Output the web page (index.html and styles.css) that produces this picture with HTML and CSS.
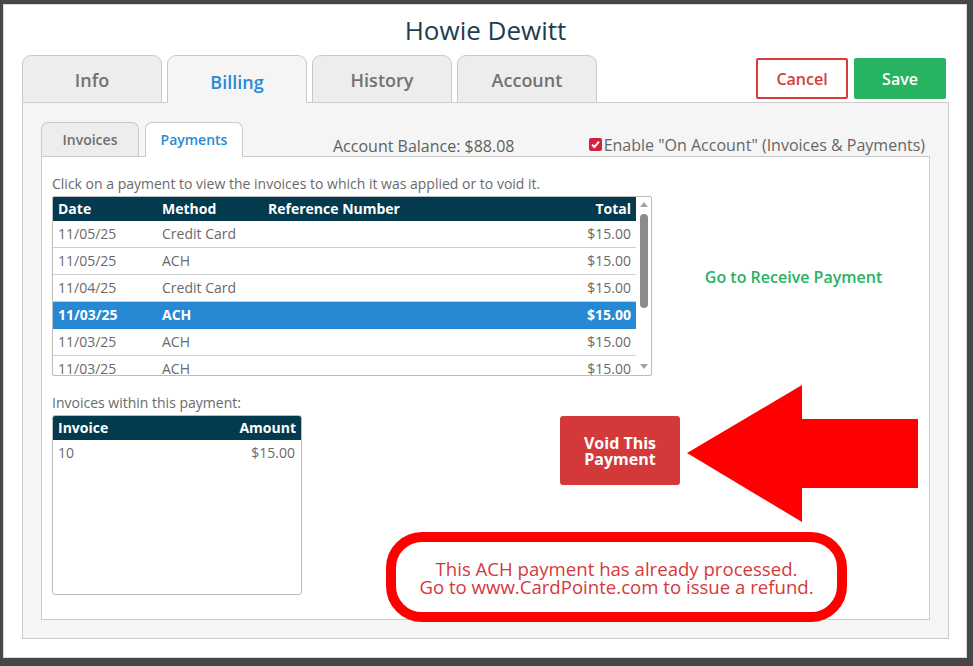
FILE: index.html
```html
<!DOCTYPE html>
<html lang="en">
<head>
    <meta charset="UTF-8" />
    <meta name="viewport" content="width=device-width, initial-scale=1" />
    <title>Howie Dewitt - Billing</title>
    <link rel="stylesheet" href="styles.css">
</head>
<body>
    <div class="modal">
        <h1 class="title">Howie Dewitt</h1>

        <div class="tabs">
            <div class="tab">Info</div>
            <div class="tab active">Billing</div>
            <div class="tab">History</div>
            <div class="tab">Account</div>
            <button class="btn btn-cancel">Cancel</button>
            <button class="btn btn-save">Save</button>
        </div>

        <div class="panel">
            <div class="subtabs">
                <div class="subtab">Invoices</div>
                <div class="subtab active">Payments</div>
                <div class="balance">Account Balance: $88.08</div>
                <label class="on-account">
                    <span class="check">
                        <svg width="9" height="9" viewBox="0 0 9 9"><path d="M1 4.6 L3.4 7 L8 1.6" fill="none" stroke="#fff" stroke-width="2"/></svg>
                    </span>
                    Enable "On Account" (Invoices &amp; Payments)
                </label>
            </div>

            <div class="inner">
                <p class="hint">Click on a payment to view the invoices to which it was applied or to void it.</p>

                <div class="row">
                    <div class="grid-box payments">
                        <div class="grid-scroll">
                            <table class="grid">
                                <thead>
                                    <tr>
                                        <th class="c-date">Date</th>
                                        <th class="c-method">Method</th>
                                        <th>Reference Number</th>
                                        <th class="num">Total</th>
                                    </tr>
                                </thead>
                                <tbody>
                                    <tr><td>11/05/25</td><td>Credit Card</td><td></td><td class="num">$15.00</td></tr>
                                    <tr><td>11/05/25</td><td>ACH</td><td></td><td class="num">$15.00</td></tr>
                                    <tr><td>11/04/25</td><td>Credit Card</td><td></td><td class="num">$15.00</td></tr>
                                    <tr class="selected"><td>11/03/25</td><td>ACH</td><td></td><td class="num">$15.00</td></tr>
                                    <tr><td>11/03/25</td><td>ACH</td><td></td><td class="num">$15.00</td></tr>
                                    <tr><td>11/03/25</td><td>ACH</td><td></td><td class="num">$15.00</td></tr>
                                </tbody>
                            </table>
                        </div>
                        <div class="scrollbar">
                            <span class="arrow-up"></span>
                            <span class="thumb"></span>
                            <span class="arrow-down"></span>
                        </div>
                    </div>
                    <div class="receive">
                        <a href="#" class="receive-link">Go to Receive Payment</a>
                    </div>
                </div>

                <p class="hint sub">Invoices within this payment:</p>

                <div class="row">
                    <div class="grid-box invoices">
                        <table class="grid small">
                            <thead>
                                <tr><th>Invoice</th><th class="num">Amount</th></tr>
                            </thead>
                            <tbody>
                                <tr><td>10</td><td class="num">$15.00</td></tr>
                            </tbody>
                        </table>
                    </div>
                    <button class="btn btn-void">Void This<br>Payment</button>
                </div>
            </div>
        </div>

        <!-- annotations -->
        <svg class="big-arrow" width="231" height="138" viewBox="0 0 231 138">
            <polygon points="0,68 115,0 115,34 231,34 231,103 115,103 115,137" fill="#ff0000"/>
        </svg>
        <div class="callout">
            This ACH payment has already processed.<br>
            Go to www.CardPointe.com to issue a refund.
        </div>
    </div>
</body>
</html>
```

FILE: styles.css
```css
body {
    margin: 0;
    padding: 4px 0 0 3px;
    background-color: #474747;
    font-family: 'Open Sans', 'Noto Sans', sans-serif;
    color: #666;
    height: 666px;
    box-sizing: border-box;
    overflow: hidden;
}

.modal {
    position: relative;
    width: 964px;
    height: 654px;
    box-sizing: border-box;
    background-color: #fff;
    border: 1px solid #d9d9d9;
    padding: 0 17px 0 18px;
}

.title {
    margin: 0;
    height: 50px;
    line-height: 50px;
    text-align: center;
    font-size: 26px;
    font-weight: 400;
    color: #1c3e4e;
}

/* main tabs */
.tabs {
    display: flex;
    align-items: flex-start;
    gap: 5px;
    height: 47px;
}

.tab {
    width: 140px;
    height: 47px;
    box-sizing: border-box;
    padding-top: 1px;
    border: 1px solid #c9c9c9;
    border-bottom: none;
    border-radius: 9px 9px 0 0;
    background-color: #ededed;
    font-size: 18px;
    font-weight: 600;
    color: #727272;
    display: flex;
    align-items: center;
    justify-content: center;
}

.tab.active {
    position: relative;
    z-index: 1;
    height: 48px;
    padding-top: 4px;
    background-color: #f5f5f5;
    color: #2a8ad4;
}

.btn {
    font-family: 'Open Sans', 'Noto Sans', sans-serif;
    font-weight: 600;
    cursor: pointer;
}

.btn-cancel,
.btn-save {
    margin-top: 3px;
    width: 92px;
    height: 41px;
    font-size: 16px;
    border-radius: 2px;
}

.btn-cancel {
    margin-left: auto;
    background-color: #fff;
    border: 2px solid #d63b3b;
    color: #d63b3b;
}

.btn-save {
    margin-left: 1px;
    margin-right: 3px;
    background-color: #27b35f;
    border: none;
    color: #fff;
}

/* billing panel */
.panel {
    width: 927px;
    height: 537px;
    box-sizing: border-box;
    border: 1px solid #cbcbcb;
    background-color: #f5f5f5;
    padding: 19px 0 0 18px;
}

.subtabs {
    display: flex;
    align-items: flex-start;
    gap: 6px;
    height: 34px;
}

.subtab {
    width: 98px;
    height: 34px;
    box-sizing: border-box;
    padding-bottom: 1px;
    border: 1px solid #c9c9c9;
    border-bottom: none;
    border-radius: 7px 7px 0 0;
    background-color: #ededed;
    font-size: 14px;
    font-weight: 600;
    color: #6f6f6f;
    display: flex;
    align-items: center;
    justify-content: center;
}

.subtab.active {
    position: relative;
    z-index: 1;
    height: 35px;
    padding-bottom: 1px;
    background-color: #fff;
    color: #2a8ad4;
}

.balance {
    margin-left: 84px;
    margin-top: 13px;
    font-size: 16px;
    color: #606060;
}

.on-account {
    margin-left: auto;
    margin-right: 23px;
    margin-top: 12px;
    display: flex;
    align-items: center;
    gap: 2px;
    font-size: 16px;
    color: #666;
}

.check {
    width: 13px;
    height: 13px;
    border-radius: 2px;
    background-color: #d2233c;
    display: flex;
    align-items: center;
    justify-content: center;
    margin-top: -2px;
}

.inner {
    width: 889px;
    height: 464px;
    box-sizing: border-box;
    border: 1px solid #cbcbcb;
    background-color: #fff;
    padding: 0 0 0 10px;
}

.hint {
    margin: 17px 0 2px;
    font-size: 14px;
    line-height: 20px;
    color: #6a6a6a;
}

.hint.sub {
    margin-top: 17px;
}

.row {
    display: flex;
    align-items: flex-start;
}

/* grids */
.grid-box {
    border: 1px solid #bdbdbd;
    border-radius: 2px;
    background-color: #fff;
    box-sizing: border-box;
    overflow: hidden;
}

.payments {
    width: 600px;
    height: 180px;
    display: flex;
}

.grid-scroll {
    width: 583px;
    height: 178px;
    overflow: hidden;
}

.grid {
    width: 100%;
    border-collapse: collapse;
    table-layout: fixed;
    font-size: 14px;
}

.grid th {
    height: 23px;
    padding: 0 5px 1px;
    background-color: #033a4d;
    color: #fff;
    font-weight: 700;
    text-align: left;
}

.grid td {
    height: 25px;
    padding: 0 5px 1px;
    border-bottom: 1px solid #cfcfcf;
    color: #6a6a6a;
    white-space: nowrap;
}

.grid .num {
    text-align: right;
}

.c-date {
    width: 94px;
}

.c-method {
    width: 96px;
}

.grid tr.selected td {
    background-color: #2589d3;
    border-bottom-color: #2589d3;
    color: #fff;
    font-weight: 700;
}

.scrollbar {
    width: 15px;
    display: flex;
    flex-direction: column;
    align-items: center;
    padding: 5px 0 6px;
    box-sizing: border-box;
}

.arrow-up,
.arrow-down {
    width: 0;
    height: 0;
    border-left: 4px solid transparent;
    border-right: 4px solid transparent;
}

.arrow-up {
    border-bottom: 5px solid #a3a3a3;
}

.arrow-down {
    margin-top: auto;
    border-top: 5px solid #a3a3a3;
}

.thumb {
    margin-top: 7px;
    width: 8px;
    height: 94px;
    border-radius: 4px;
    background-color: #8b8b8b;
}

.receive {
    flex: 1;
    text-align: center;
    padding-top: 70px;
    padding-left: 6px;
}

.receive-link {
    font-size: 16px;
    font-weight: 600;
    color: #27b35f;
    text-decoration: none;
}

.invoices {
    width: 250px;
    height: 180px;
    border-radius: 3px;
}

.grid.small th {
    height: 23px;
    padding: 0 5px 1px;
}

.grid.small td {
    height: 25px;
    padding: 0 6px 1px 5px;
    border-bottom: none;
}

.btn-void {
    margin-left: 258px;
    margin-top: 1px;
    width: 120px;
    height: 69px;
    border: none;
    border-radius: 3px;
    background-color: #d4393a;
    color: #fff;
    font-size: 16px;
    font-weight: 700;
    line-height: 16px;
}

/* annotations */
.big-arrow {
    position: absolute;
    left: 683px;
    top: 380px;
}

.callout {
    position: absolute;
    left: 382px;
    top: 527px;
    width: 461px;
    height: 90px;
    box-sizing: border-box;
    border: 10px solid #ff0000;
    border-radius: 36px;
    background-color: #fff;
    display: flex;
    align-items: center;
    justify-content: center;
    text-align: center;
    padding-top: 1px;
    font-size: 18.6px;
    font-weight: 500;
    line-height: 18px;
    color: #d5393b;
}
```
